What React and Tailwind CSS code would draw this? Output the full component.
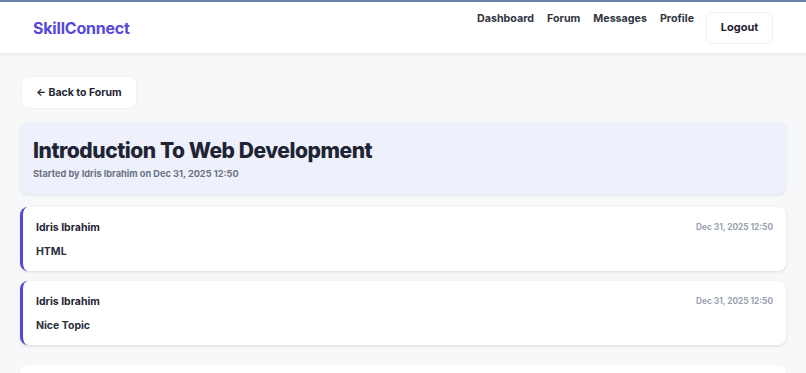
const posts = [
  { author: 'Idris Ibrahim', date: 'Dec 31, 2025 12:50', body: 'HTML' },
  { author: 'Idris Ibrahim', date: 'Dec 31, 2025 12:50', body: 'Nice Topic' },
]

const PostCard = ({ post }) => (
  <div className="bg-white rounded-lg border-l-[3px] border-[#5548d9] shadow-[0_1px_3px_rgba(0,0,0,0.12)] px-[13px] pt-[14px] pb-[12px]">
    <div className="flex items-center justify-between">
      <span className="text-[10.5px] font-bold text-[#1f2433] leading-[14px]">{post.author}</span>
      <span className="text-[8.3px] font-bold text-[#9aa1b1] leading-[12px] -mt-px">{post.date}</span>
    </div>
    <p className="mt-[10px] text-[10.5px] font-bold text-[#2b303d] leading-[14px]">{post.body}</p>
  </div>
)

export default function App() {
  return (
    <div className="min-h-screen bg-[#f7f8fa] font-['Inter',sans-serif] border-t-2 border-[#6a84ad]">
      {/* Header */}
      <header className="bg-white h-[51px] flex items-center justify-between px-[33px] shadow-[0_1px_4px_rgba(0,0,0,0.1)] relative">
        <span className="text-[16px] font-bold text-[#5549da] tracking-[-0.2px]">SkillConnect</span>
        <nav className="flex items-start gap-[13px] text-[10.7px] font-bold text-[#2f3542]">
          <a className="leading-[14px]">Dashboard</a>
          <a className="leading-[14px]">Forum</a>
          <a className="leading-[14px]">Messages</a>
          <a className="leading-[14px]">Profile</a>
          <button className="-ml-px h-[32px] w-[67px] rounded-md border border-[#eef0f3] bg-white text-[11px] font-bold text-[#1f2433]">
            Logout
          </button>
        </nav>
      </header>

      <main className="px-[20px] pt-[23px]">
        <button className="h-[33px] px-[14px] bg-white rounded-lg border border-[#f0f1f4] text-[10.5px] font-bold text-[#1f2433] ml-[1px]">
          ← Back to Forum
        </button>

        <div className="mt-[13px] bg-[#eef0fb] rounded-lg shadow-[0_1px_3px_rgba(0,0,0,0.1)] px-[13px] pt-[15px] pb-[13px]">
          <h1 className="text-[21px] font-extrabold text-[#1e2433] leading-[28px] tracking-[-0.45px]">
            Introduction To Web Development
          </h1>
          <p className="mt-[2px] text-[9.2px] font-bold text-[#6b7385]">
            Started by Idris Ibrahim on Dec 31, 2025 12:50
          </p>
        </div>

        <div className="mt-[13px] flex flex-col gap-[10px]">
          {posts.map((p, i) => (
            <PostCard key={i} post={p} />
          ))}
        </div>

        <div className="mt-[20px] bg-white rounded-lg shadow-[0_1px_3px_rgba(0,0,0,0.08)] h-[80px]" />
      </main>
    </div>
  )
}
